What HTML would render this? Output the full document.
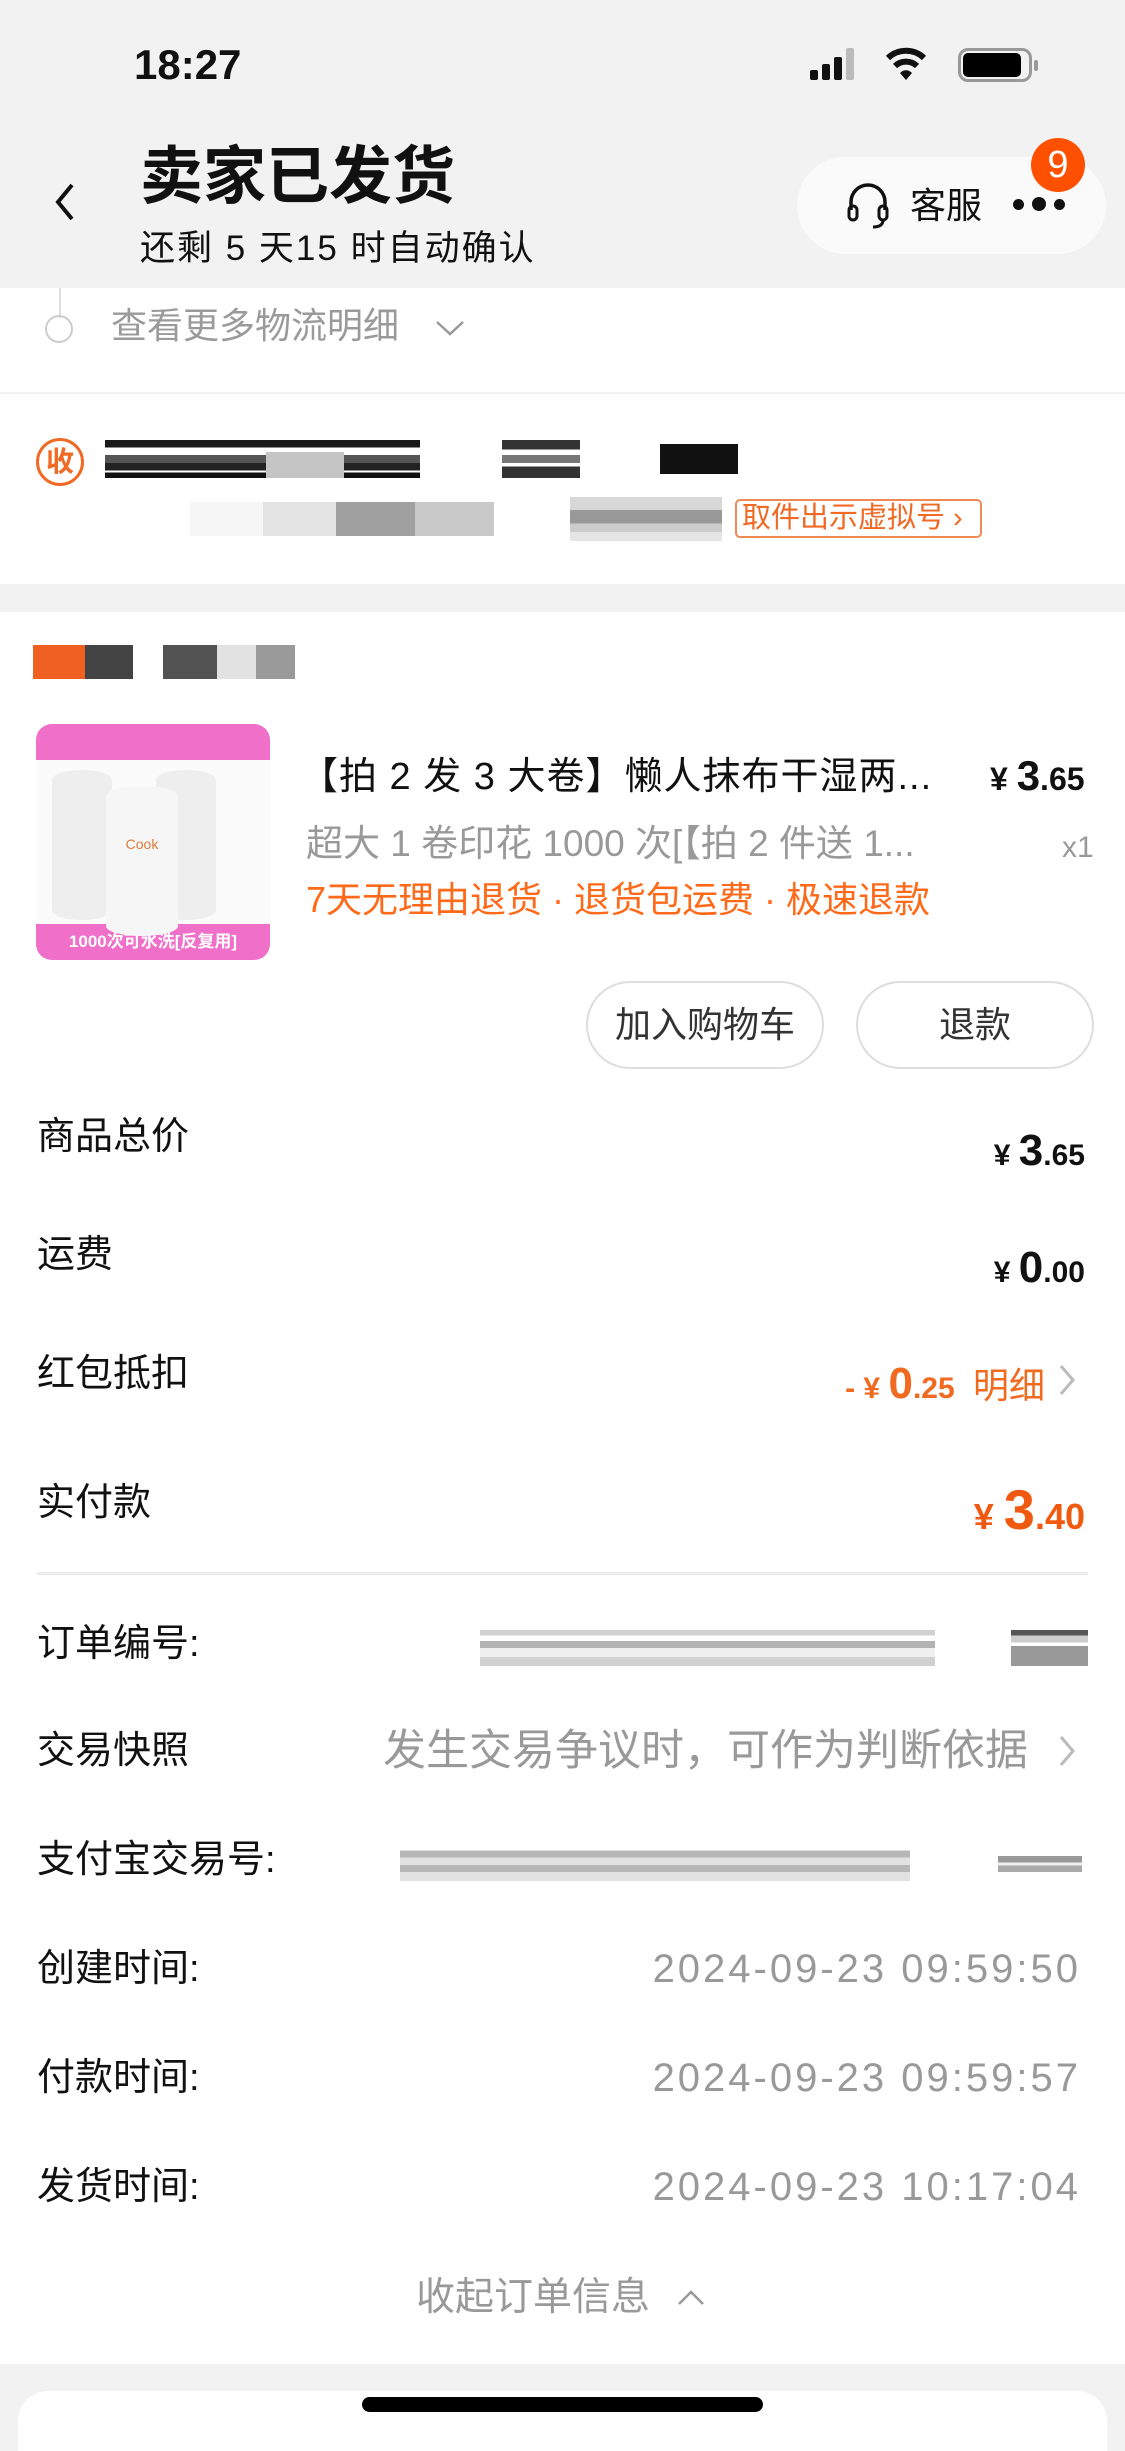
<!DOCTYPE html>
<html><head><meta charset="utf-8"><style>
*{margin:0;padding:0;box-sizing:border-box}
body{width:1125px;height:2436px;position:relative;background:#f2f2f2;font-family:"Liberation Sans","Noto Sans CJK SC",sans-serif;color:#111;overflow:hidden}
.a{position:absolute;white-space:nowrap}
.w{position:absolute;background:#fff;left:0;width:1125px}
.lab{position:absolute;left:37px;font-size:38px;line-height:50px;color:#111}
.gr{color:#999}
.bar{position:absolute}
.dt{position:absolute;right:44px;font-size:40px;line-height:50px;color:#999;letter-spacing:3px;white-space:nowrap}
</style></head><body>
<div class="a" style="left:134px;top:40px;font-size:42px;font-weight:bold;line-height:50px">18:27</div>
<div class="bar" style="left:810px;top:70px;width:8px;height:10px;background:#111;border-radius:2px"></div>
<div class="bar" style="left:822px;top:64px;width:8px;height:16px;background:#111;border-radius:2px"></div>
<div class="bar" style="left:834px;top:57px;width:8px;height:23px;background:#111;border-radius:2px"></div>
<div class="bar" style="left:846px;top:48px;width:8px;height:32px;background:#bbb;border-radius:2px"></div>
<svg class="a" style="left:886px;top:46px" width="40" height="36" viewBox="0 0 40 36"><path d="M2 12 A26 26 0 0 1 38 12" stroke="#111" stroke-width="6" fill="none"/><path d="M9 20 A16 16 0 0 1 31 20" stroke="#111" stroke-width="6" fill="none"/><path d="M14 27 L20 34 L26 27 A8 8 0 0 0 14 27Z" fill="#111"/></svg>
<div class="bar" style="left:958px;top:48px;width:74px;height:34px;border:3px solid #999;border-radius:10px"></div>
<div class="bar" style="left:963px;top:53px;width:58px;height:24px;background:#000;border-radius:5px"></div>
<div class="bar" style="left:1034px;top:60px;width:4px;height:11px;background:#999;border-radius:2px"></div>
<svg class="a" style="left:52px;top:182px" width="26" height="40" viewBox="0 0 26 40"><path d="M20 3 L6 20 L20 37" stroke="#111" stroke-width="4" fill="none"/></svg>
<div class="a" style="left:140px;top:138px;font-size:63px;font-weight:bold;line-height:78px">卖家已发货</div>
<div class="a" style="left:140px;top:227px;font-size:35px;line-height:44px;letter-spacing:2px">还剩 5 天15 时自动确认</div>
<div class="bar" style="left:797px;top:157px;width:309px;height:97px;background:#fafafa;border-radius:49px"></div>
<svg class="a" style="left:845px;top:182px" width="46" height="48" viewBox="0 0 46 48"><path d="M6 28 V20 A17 17 0 0 1 40 20 V28" stroke="#111" stroke-width="3.5" fill="none"/><rect x="4" y="24" width="8" height="14" rx="4" stroke="#111" stroke-width="3" fill="none"/><rect x="34" y="24" width="8" height="14" rx="4" stroke="#111" stroke-width="3" fill="none"/><path d="M38 38 Q38 45 28 45" stroke="#111" stroke-width="3" fill="none"/></svg>
<div class="a" style="left:910px;top:183px;font-size:36px;line-height:46px">客服</div>
<div class="bar" style="left:1013px;top:199px;width:11px;height:11px;background:#111;border-radius:50%"></div>
<div class="bar" style="left:1032px;top:197px;width:14px;height:14px;background:#111;border-radius:50%"></div>
<div class="bar" style="left:1054px;top:199px;width:11px;height:11px;background:#111;border-radius:50%"></div>
<div class="bar" style="left:1031px;top:138px;width:54px;height:54px;background:#ff5000;border-radius:50%;color:#fff;font-size:38px;line-height:54px;text-align:center">9</div>
<div class="w" style="top:288px;height:104px"></div>
<div class="bar" style="left:59px;top:288px;width:2px;height:30px;background:#ddd"></div>
<div class="bar" style="left:45px;top:315px;width:28px;height:28px;border:2.5px solid #ccc;border-radius:50%"></div>
<div class="a gr" style="left:111px;top:303px;font-size:36px;line-height:46px;color:#9a9a9a">查看更多物流明细</div>
<svg class="a" style="left:434px;top:318px" width="32" height="20" viewBox="0 0 32 20"><path d="M3 4 L16 16 L29 4" stroke="#999" stroke-width="2.5" fill="none"/></svg>
<div class="w" style="top:394px;height:190px"></div>
<div class="bar" style="left:36px;top:438px;width:48px;height:48px;border:3px solid #f06a25;border-radius:50%;color:#f06a25;font-size:28px;line-height:42px;text-align:center;font-weight:bold">收</div>
<div class="bar" style="left:105px;top:440px;width:315px;height:38px;background:linear-gradient(#1a1a1a 0 20%,#fff 20% 40%,#555 40% 60%,#222 60% 80%,#fff 80% 85%,#111 85%)"></div>
<div class="bar" style="left:266px;top:452px;width:78px;height:26px;background:#c5c5c5"></div>
<div class="bar" style="left:502px;top:440px;width:78px;height:38px;background:linear-gradient(#333 0 25%,#fff 25% 40%,#777 40% 60%,#fff 60% 70%,#333 70%)"></div>
<div class="bar" style="left:660px;top:444px;width:78px;height:30px;background:#111"></div>
<div class="bar" style="left:190px;top:502px;width:304px;height:34px;background:linear-gradient(90deg,#f4f4f4 0 24%,#ddd 24% 48%,#888 48% 74%,#bbb 74%);opacity:.8"></div>
<div class="bar" style="left:570px;top:497px;width:152px;height:44px;background:linear-gradient(#d8d8d8 0 30%,#999 30% 60%,#ccc 60% 80%,#e5e5e5 80%)"></div>
<div class="bar" style="left:735px;top:499px;width:247px;height:39px;border:2px solid #f08a55;border-radius:5px;color:#f06a25;font-size:29px;line-height:35px;padding-left:5px">取件出示虚拟号 ›</div>
<div class="w" style="top:612px;height:1752px"></div>
<div class="bar" style="left:33px;top:645px;width:52px;height:34px;background:#f06020"></div>
<div class="bar" style="left:85px;top:645px;width:300px;height:34px;background:linear-gradient(90deg,#222 0 16%,#fff 16% 26%,#333 26% 44%,#ddd 44% 57%,#888 57% 70%,#fff 70%);opacity:.85"></div>
<div class="bar" style="left:36px;top:724px;width:234px;height:236px;border-radius:16px;background:#fbfbfb;overflow:hidden">
<div style="position:absolute;left:0;top:0;width:234px;height:36px;background:#f06fc8"></div>
<div style="position:absolute;left:0;top:200px;width:234px;height:36px;background:#f06fc8;color:#fff;font-size:17px;line-height:36px;text-align:center;font-weight:bold">1000次可水洗[反复用]</div>
<div style="position:absolute;left:16px;top:46px;width:60px;height:150px;background:#eee;border-radius:30px/10px"></div>
<div style="position:absolute;left:120px;top:46px;width:60px;height:150px;background:#eee;border-radius:30px/10px"></div>
<div style="position:absolute;left:70px;top:62px;width:72px;height:150px;background:#f6f6f6;border-radius:36px/10px;color:#e07a3a;font-size:14px;text-align:center;padding-top:50px">Cook</div>
</div>
<div class="a" style="left:300px;top:752px;font-size:38px;line-height:50px;letter-spacing:1px">【拍 2 发 3 大卷】懒人抹布干湿两...</div>
<div class="a" style="left:990px;top:750px;font-size:32px;line-height:52px;font-weight:bold">¥ <span style="font-size:42px">3</span>.65</div>
<div class="a" style="left:306px;top:819px;font-size:37px;line-height:50px;color:#999">超大 1 卷印花 1000 次[【拍 2 件送 1...</div>
<div class="a" style="left:1062px;top:828px;font-size:30px;line-height:40px;color:#999">x1</div>
<div class="a" style="left:306px;top:875px;font-size:36px;line-height:50px;color:#ff6a1a">7天无理由退货 · 退货包运费 · 极速退款</div>
<div class="bar" style="left:586px;top:981px;width:238px;height:88px;border:2px solid #ddd;border-radius:44px;font-size:36px;line-height:84px;text-align:center;color:#333">加入购物车</div>
<div class="bar" style="left:856px;top:981px;width:238px;height:88px;border:2px solid #ddd;border-radius:44px;font-size:36px;line-height:84px;text-align:center;color:#333">退款</div>
<div class="lab" style="top:1112px">商品总价</div>
<div class="a" style="right:40px;top:1124px;font-size:30px;line-height:54px;font-weight:bold">¥ <span style="font-size:44px">3</span>.65</div>
<div class="lab" style="top:1230px">运费</div>
<div class="a" style="right:40px;top:1241px;font-size:30px;line-height:54px;font-weight:bold">¥ <span style="font-size:44px">0</span>.00</div>
<div class="lab" style="top:1349px">红包抵扣</div>
<div class="a" style="right:80px;top:1357px;font-size:30px;line-height:54px;font-weight:bold;color:#f06a20">- ¥ <span style="font-size:44px">0</span>.25 <span style="font-weight:normal;font-size:36px">&nbsp;明细</span></div>
<svg class="a" style="left:1058px;top:1362px" width="18" height="36" viewBox="0 0 18 36"><path d="M3 4 L15 18 L3 32" stroke="#bbb" stroke-width="3" fill="none"/></svg>
<div class="lab" style="top:1478px">实付款</div>
<div class="a" style="right:40px;top:1478px;font-size:36px;line-height:64px;font-weight:bold;color:#f05a10">¥ <span style="font-size:56px">3</span>.40</div>
<div class="bar" style="left:37px;top:1572px;width:1051px;height:3px;background:#ececec"></div>
<div class="lab" style="top:1619px">订单编号:</div>
<div class="bar" style="left:480px;top:1630px;width:455px;height:36px;background:linear-gradient(#ccc 0 15%,#fff 15% 30%,#aaa 30% 50%,#eee 50% 75%,#ccc 75%);opacity:.9"></div>
<div class="bar" style="left:1011px;top:1630px;width:77px;height:36px;background:linear-gradient(#555 0 15%,#ccc 15% 35%,#fff 35% 45%,#999 45%)"></div>
<div class="lab" style="top:1726px">交易快照</div>
<div class="a" style="left:383px;top:1724px;font-size:43px;line-height:54px;color:#999">发生交易争议时，可作为判断依据</div>
<svg class="a" style="left:1058px;top:1733px" width="18" height="36" viewBox="0 0 18 36"><path d="M3 4 L15 18 L3 32" stroke="#bbb" stroke-width="3" fill="none"/></svg>
<div class="lab" style="top:1835px">支付宝交易号:</div>
<div class="bar" style="left:400px;top:1845px;width:510px;height:36px;background:linear-gradient(#fff 0 15%,#aaa 15% 35%,#ddd 35% 55%,#aaa 55% 75%,#ddd 75%);opacity:.85"></div>
<div class="bar" style="left:998px;top:1856px;width:84px;height:16px;background:linear-gradient(#999 0 40%,#eee 40% 60%,#aaa 60%)"></div>
<div class="lab" style="top:1944px">创建时间:</div>
<div class="dt" style="top:1944px">2024-09-23 09:59:50</div>
<div class="lab" style="top:2053px">付款时间:</div>
<div class="dt" style="top:2053px">2024-09-23 09:59:57</div>
<div class="lab" style="top:2162px">发货时间:</div>
<div class="dt" style="top:2162px">2024-09-23 10:17:04</div>
<div class="a" style="left:416px;top:2273px;font-size:39px;line-height:50px;color:#999">收起订单信息</div>
<svg class="a" style="left:676px;top:2288px" width="30" height="20" viewBox="0 0 30 20"><path d="M3 16 L15 4 L27 16" stroke="#999" stroke-width="2.5" fill="none"/></svg>
<div class="bar" style="left:18px;top:2391px;width:1089px;height:60px;background:#fff;border-radius:30px 30px 0 0"></div>
<div class="bar" style="left:362px;top:2397px;width:401px;height:15px;background:#000;border-radius:8px"></div>
</body></html>
